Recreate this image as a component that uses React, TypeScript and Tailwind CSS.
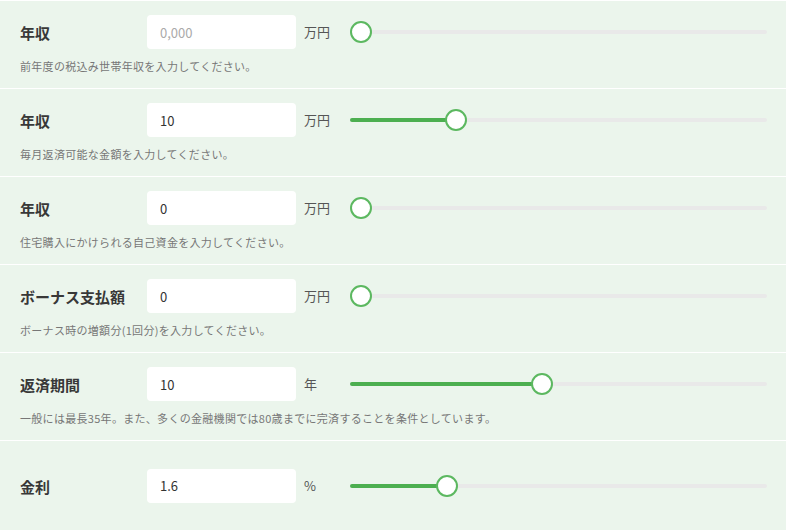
import React from 'react';

type Field = {
  label: string;
  value: string;
  placeholder?: string;
  unit: string;
  ratio: number;
  note?: string;
};

const fields: Field[] = [
  { label: '年収', value: '', placeholder: '0,000', unit: '万円', ratio: 0, note: '前年度の税込み世帯年収を入力してください。' },
  { label: '年収', value: '10', unit: '万円', ratio: 0.24, note: '毎月返済可能な金額を入力してください。' },
  { label: '年収', value: '0', unit: '万円', ratio: 0, note: '住宅購入にかけられる自己資金を入力してください。' },
  { label: 'ボーナス支払額', value: '0', unit: '万円', ratio: 0, note: 'ボーナス時の増額分(1回分)を入力してください。' },
  { label: '返済期間', value: '10', unit: '年', ratio: 0.457, note: '一般には最長35年。また、多くの金融機関では80歳までに完済することを条件としています。' },
  { label: '金利', value: '1.6', unit: '%', ratio: 0.217 },
];

const TRACK = 417;
const THUMB = 22;

const Slider = ({ ratio }: { ratio: number }) => {
  const left = ratio * (TRACK - THUMB);
  return (
    <div className="relative h-[22px] w-[417px]">
      <div className="absolute left-0 right-0 top-[9px] h-[4px] rounded-full bg-[#e9e9e9]" />
      {ratio > 0 && (
        <div
          className="absolute left-0 top-[9px] h-[4px] rounded-full bg-[#4caf50]"
          style={{ width: left + THUMB / 2 }}
        />
      )}
      <div
        className="absolute top-0 h-[22px] w-[22px] rounded-full border-2 border-[#5cb860] bg-white"
        style={{ left }}
      />
    </div>
  );
};

const Row = ({ field, last }: { field: Field; last?: boolean }) => (
  <div
    className={
      'flex flex-col justify-center border-t border-white pl-[20px] pr-[19px] ' +
      (last ? 'flex-1' : 'h-[88px]')
    }
  >
    <div className="flex items-center">
      <div className="w-[127px] pt-[1px] text-[15px] font-bold leading-none text-[#383838]">{field.label}</div>
      <input
        readOnly
        value={field.value}
        placeholder={field.placeholder}
        className="h-[34px] w-[149px] rounded-[4px] bg-white px-[13px] text-[13px] text-[#333] outline-none placeholder:text-[#aaa]"
      />
      <div className="w-[54px] pl-[8px] text-[13px] text-[#555]">{field.unit}</div>
      <Slider ratio={field.ratio} />
    </div>
    {field.note && (
      <p className="mt-[9px] text-[11px] leading-[16px] tracking-[0.3px] text-[#777]">{field.note}</p>
    )}
  </div>
);

const App = () => {
  return (
    <div
      className="flex h-[530px] w-[790px] bg-white"
      style={{ fontFamily: '"Noto Sans CJK JP", "Noto Sans", sans-serif' }}
    >
      <div className="flex h-full w-[786px] flex-col bg-[#ebf5ec]">
        {fields.map((f, i) => (
          <Row key={i} field={f} last={i === fields.length - 1} />
        ))}
      </div>
    </div>
  );
};

export default App;
